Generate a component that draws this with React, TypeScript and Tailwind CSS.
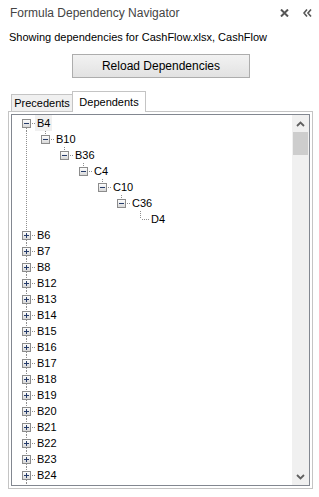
import React from 'react';

type Row = {
  label: string;
  level: number;
  box: 'minus' | 'plus' | null;
  top: boolean;
  bottom: boolean;
  pass: boolean;
  selected?: boolean;
};

const chain = ['B4', 'B10', 'B36', 'C4', 'C10', 'C36', 'D4'];
const roots = ['B6', 'B7', 'B8', 'B12', 'B13', 'B14', 'B15', 'B16', 'B17', 'B18', 'B19', 'B20', 'B21', 'B22', 'B23', 'B24', 'B25'];

const rows: Row[] = [
  ...chain.map((label, i) => ({
    label,
    level: i,
    box: i < chain.length - 1 ? ('minus' as const) : null,
    top: i > 0,
    bottom: i === 0,
    pass: i > 0,
    selected: i === 0,
  })),
  ...roots.map(label => ({ label, level: 0, box: 'plus' as const, top: true, bottom: true, pass: false })),
];

const DOT = '#8f8f8f';

function TreeRow({ r }: { r: Row }) {
  const w = 23 + r.level * 19;
  const cx = 14 + r.level * 19;
  const x = cx + 0.5;
  return (
    <div className="flex h-4 items-center">
      <svg width={w} height={16} className="shrink-0">
        <defs>
          <linearGradient id="boxfill" x1="0" y1="0" x2="0" y2="1">
            <stop offset="0" stopColor="#ffffff" />
            <stop offset="1" stopColor="#d6d6d6" />
          </linearGradient>
        </defs>
        {r.pass && <line x1={14.5} y1={0} x2={14.5} y2={16} stroke={DOT} strokeDasharray="1 1" />}
        {r.top && <line x1={x} y1={0} x2={x} y2={r.box ? 4 : 8} stroke={DOT} strokeDasharray="1 1" />}
        {r.bottom && <line x1={x} y1={13} x2={x} y2={16} stroke={DOT} strokeDasharray="1 1" />}
        <line x1={r.box ? cx + 6 : cx + 2} y1={8.5} x2={w} y2={8.5} stroke={DOT} strokeDasharray="1 1" />
        {r.box && (
          <>
            <rect x={cx - 3.5} y={4.5} width={8} height={8} fill="url(#boxfill)" stroke="#8c8c8c" />
            <line x1={cx - 2} y1={8.5} x2={cx + 3} y2={8.5} stroke="#263c6a" />
            {r.box === 'plus' && <line x1={x} y1={6} x2={x} y2={11} stroke="#263c6a" />}
          </>
        )}
      </svg>
      <span className={`h-4 px-[2px] leading-4 text-[11px] text-black ${r.selected ? 'bg-[#f0f0f0]' : ''}`}>
        {r.label}
      </span>
    </div>
  );
}

export default function App() {
  return (
    <div
      className="w-[319px] h-[497px] bg-white overflow-hidden flex flex-col"
      style={{ fontFamily: '"Liberation Sans", Arial, sans-serif' }}
    >
      <div className="flex items-center h-[26px] pl-[10px] pr-[5px]">
        <span className="text-[12px] text-[#444444] flex-1">Formula Dependency Navigator</span>
        <svg width="9" height="8" viewBox="0 0 9 8" className="mr-[14px]">
          <path d="M1 0.5 L8 7.5 M8 0.5 L1 7.5" stroke="#555555" strokeWidth="2" />
        </svg>
        <svg width="9" height="8" viewBox="0 0 9 8" className="mr-[2px]">
          <path d="M4 0.5 L1 4 L4 7.5 M8 0.5 L5 4 L8 7.5" stroke="#555555" strokeWidth="1.6" fill="none" />
        </svg>
      </div>
      <div className="pl-[9px] h-[22px] flex items-center text-[11px] text-black">
        Showing dependencies for CashFlow.xlsx, CashFlow
      </div>
      <div className="flex pl-[72px] mt-[6px]">
        <button className="w-[178px] h-[24px] border border-[#adadad] bg-gradient-to-b from-[#f2f2f2] to-[#e2e2e2] text-[12px] text-black">
          Reload Dependencies
        </button>
      </div>
      <div className="flex items-end pl-[11px] mt-[12px] h-[21px]">
        <div className="h-[17px] w-[62px] border border-b-0 border-[#c4c4c4] bg-[#f0f0f0] flex items-center justify-center text-[11px] text-black">
          Precedents
        </div>
        <div className="h-[21px] w-[74px] -ml-px border border-b-0 border-[#c4c4c4] bg-white flex items-start pt-[2px] justify-center text-[11px] text-black relative z-10 -mb-px">
          Dependents
        </div>
      </div>
      <div className="ml-[8px] w-[305px] h-[378px] border border-[#c4c4c4] p-[2px]">
        <div className="h-full border border-[#828790] flex overflow-hidden">
          <div className="flex-1 overflow-hidden">
            {rows.map(r => (
              <TreeRow key={r.label} r={r} />
            ))}
          </div>
          <div className="w-[17px] bg-[#f0f0f0] flex flex-col">
            <div className="h-[17px] flex items-center justify-center">
              <svg width="9" height="6" viewBox="0 0 9 6">
                <path d="M1 5 L4.5 1.5 L8 5" stroke="#606060" strokeWidth="1.8" fill="none" />
              </svg>
            </div>
            <div className="h-[23px] mx-px bg-[#cdcdcd]" />
            <div className="flex-1" />
            <div className="h-[17px] flex items-center justify-center">
              <svg width="9" height="6" viewBox="0 0 9 6">
                <path d="M1 1 L4.5 4.5 L8 1" stroke="#606060" strokeWidth="1.8" fill="none" />
              </svg>
            </div>
          </div>
        </div>
      </div>
    </div>
  );
}
